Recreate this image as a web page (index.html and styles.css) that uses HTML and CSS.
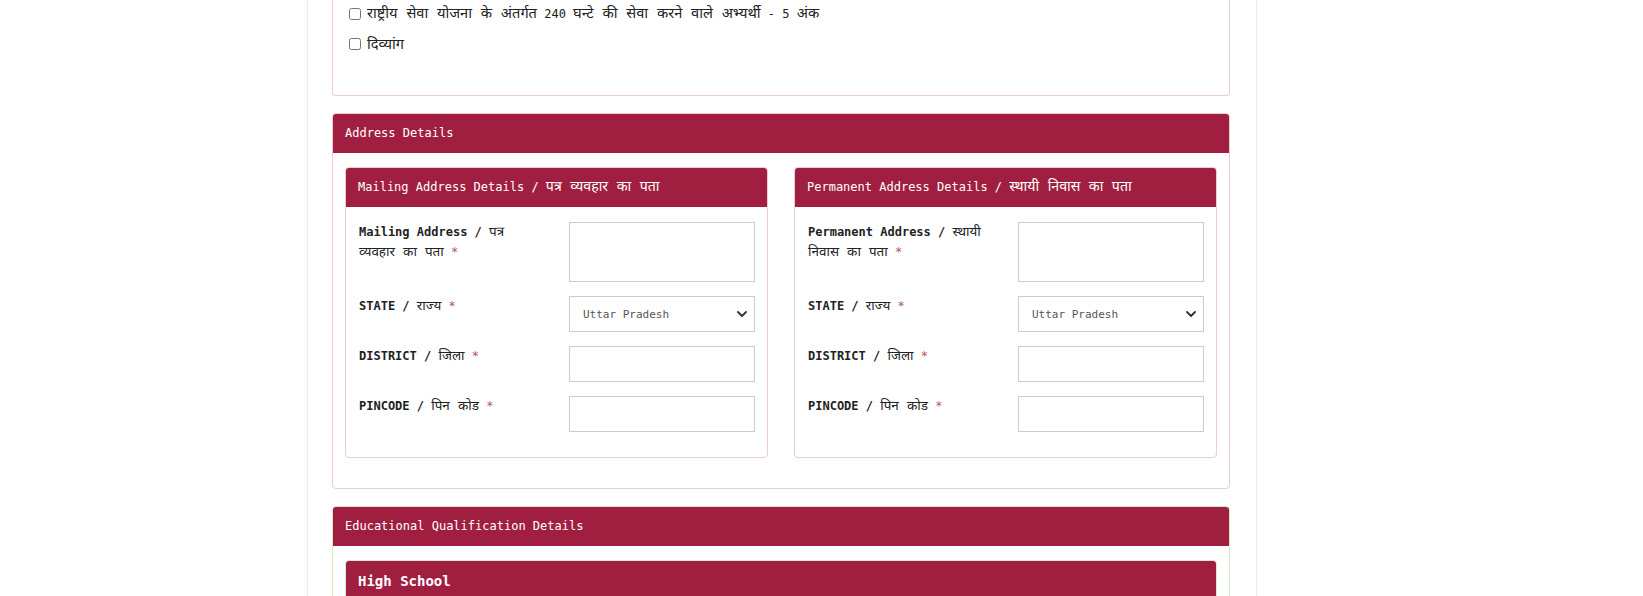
FILE: index.html
```html
<!DOCTYPE html>
<html lang="hi">
<head>
<meta charset="utf-8">
<title>Address Details</title>
<link rel="stylesheet" href="styles.css">
</head>
<body>
<div class="page">
  <div class="panel panel-cut">
    <div class="checks">
      <label class="check"><input type="checkbox"><span><span class="dv">राष्ट्रीय सेवा योजना के अंतर्गत</span> 240 <span class="dv">घन्टे की सेवा करने वाले अभ्यर्थी</span> - 5 <span class="dv">अंक</span></span></label>
      <label class="check"><input type="checkbox"><span class="dv">दिव्यांग</span></label>
    </div>
  </div>

  <div class="panel">
    <div class="panel-heading">Address Details</div>
    <div class="panel-body addr-grid">
      <div class="panel sub">
        <div class="panel-heading">Mailing Address Details / <span class="dv">पत्र व्यवहार का पता</span></div>
        <div class="form">
          <div class="row">
            <label class="lbl">Mailing Address / <span class="dv">पत्र व्यवहार का पता</span> <span class="req">*</span></label>
            <textarea class="ctl ta"></textarea>
          </div>
          <div class="row">
            <label class="lbl">STATE / <span class="dv">राज्य</span> <span class="req">*</span></label>
            <div class="selwrap">
              <select class="ctl sel"><option>Uttar Pradesh</option></select>
              <svg class="chev" width="10" height="6" viewBox="0 0 10 6"><polyline points="1,1 5,5 9,1" fill="none" stroke="#333" stroke-width="1.8" stroke-linecap="round" stroke-linejoin="round"/></svg>
            </div>
          </div>
          <div class="row">
            <label class="lbl">DISTRICT / <span class="dv">जिला</span> <span class="req">*</span></label>
            <input class="ctl" type="text">
          </div>
          <div class="row">
            <label class="lbl">PINCODE / <span class="dv">पिन कोड</span> <span class="req">*</span></label>
            <input class="ctl" type="text">
          </div>
        </div>
      </div>
      <div class="panel sub">
        <div class="panel-heading">Permanent Address Details / <span class="dv">स्थायी निवास का पता</span></div>
        <div class="form">
          <div class="row">
            <label class="lbl">Permanent Address / <span class="dv">स्थायी निवास का पता</span> <span class="req">*</span></label>
            <textarea class="ctl ta"></textarea>
          </div>
          <div class="row">
            <label class="lbl">STATE / <span class="dv">राज्य</span> <span class="req">*</span></label>
            <div class="selwrap">
              <select class="ctl sel"><option>Uttar Pradesh</option></select>
              <svg class="chev" width="10" height="6" viewBox="0 0 10 6"><polyline points="1,1 5,5 9,1" fill="none" stroke="#333" stroke-width="1.8" stroke-linecap="round" stroke-linejoin="round"/></svg>
            </div>
          </div>
          <div class="row">
            <label class="lbl">DISTRICT / <span class="dv">जिला</span> <span class="req">*</span></label>
            <input class="ctl" type="text">
          </div>
          <div class="row">
            <label class="lbl">PINCODE / <span class="dv">पिन कोड</span> <span class="req">*</span></label>
            <input class="ctl" type="text">
          </div>
        </div>
      </div>
    </div>
  </div>

  <div class="panel panel-green">
    <div class="panel-heading">Educational Qualification Details</div>
    <div class="panel-body edu">
      <div class="panel sub panel-green">
        <div class="panel-heading hs">High School</div>
        <div class="hs-body"></div>
      </div>
    </div>
  </div>
</div>
</body>
</html>
```

FILE: styles.css
```css
html, body {
  margin: 0;
  padding: 0;
  background: #ffffff;
}

body {
  font-family: "DejaVu Sans Mono", "Noto Sans Devanagari", "Lohit Devanagari", "Noto Sans", monospace;
  font-size: 12px;
  color: #222;
}

.dv {
  font-size: 1.22em;
  line-height: 1;
}

.page {
  box-sizing: border-box;
  width: 950px;
  min-height: 700px;
  margin-left: 307px;
  padding: 0 26px 0 24px;
  border-left: 1px solid #ececec;
  border-right: 1px solid #ececec;
}

.panel {
  border: 1px solid #ebccd1;
  border-radius: 4px;
  background: #fff;
  margin-bottom: 17px;
}

.panel-green {
  border-color: #d6e9c6;
}

.panel-cut {
  border-top: none;
  border-radius: 0 0 4px 4px;
}

.panel-heading {
  box-sizing: border-box;
  height: 39px;
  background: #a01f41;
  color: #fff;
  padding: 10px 12px;
  line-height: 19px;
  font-size: 12px;
  border-radius: 3px 3px 0 0;
  white-space: nowrap;
  overflow: hidden;
}

.panel-heading .dv {
  font-size: 1.18em;
}

.checks {
  padding: 0 13px 35px 13px;
}

.check {
  display: flex;
  align-items: center;
  height: 28px;
  margin-bottom: 2px;
  font-size: 12px;
  line-height: 20px;
  color: #222;
}

.check input {
  margin: 0 6px 0 3px;
  width: 12px;
  height: 12px;
}

.panel-body {
  padding: 14px 12px 30px 12px;
}

.addr-grid {
  display: grid;
  grid-template-columns: 1fr 1fr;
  column-gap: 26px;
}

.sub {
  margin-bottom: 0;
}

.form {
  padding: 15px 12px 25px 13px;
}

.row {
  display: grid;
  grid-template-columns: 1fr 1fr;
  column-gap: 24px;
  margin-bottom: 14px;
  align-items: start;
}

.row:last-child {
  margin-bottom: 0;
}

.lbl {
  font-weight: bold;
  line-height: 20px;
  font-size: 12px;
  color: #222;
}

.lbl .dv {
  font-weight: normal;
  font-size: 1.12em;
}

.req {
  color: #b0565f;
  font-weight: normal;
}

.ctl {
  box-sizing: border-box;
  width: 100%;
  height: 36px;
  border: 1px solid #cccccc;
  border-radius: 0;
  background: #fff;
  margin: 0;
  font-family: "DejaVu Sans Mono", monospace;
  display: block;
}

.ta {
  height: 60px;
  resize: none;
}

.selwrap {
  position: relative;
}

.sel {
  -webkit-appearance: none;
  appearance: none;
  font-size: 11px;
  color: #555;
  padding: 0 24px 0 13px;
}

.chev {
  position: absolute;
  right: 8px;
  top: 15px;
  pointer-events: none;
}

.edu {
  padding-bottom: 14px;
}

.hs {
  font-size: 14px;
  font-weight: bold;
  line-height: 20px;
  height: 40px;
}

.hs-body {
  height: 60px;
}
```
